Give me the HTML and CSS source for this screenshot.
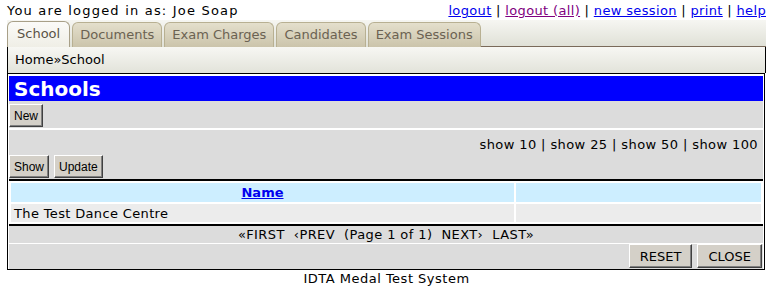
FILE: index.html
```html
<!DOCTYPE html>
<html>
<head>
<meta charset="utf-8">
<link rel="stylesheet" href="styles.css">
</head>
<body>
<div class="topbar">
  <span class="who">You are logged in as: Joe Soap</span>
  <span class="links"><a href="#">logout</a> | <a href="#" class="visited">logout (all)</a> | <a href="#">new session</a> | <a href="#">print</a> | <a href="#">help</a></span>
</div>
<div class="tabbar">
  <span class="tab active">School</span>
  <span class="tab">Documents</span>
  <span class="tab">Exam Charges</span>
  <span class="tab">Candidates</span>
  <span class="tab">Exam Sessions</span>
  <span class="tabfill"></span>
</div>
<div class="crumb">Home»School</div>
<div class="main">
  <div class="title">Schools</div>
  <div class="panel">
    <div class="row-new"><button class="btn small">New</button></div>
    <div class="row-show">
      <div class="showlinks">show 10 | show 25 | show 50 | show 100</div>
      <div class="showbtns"><button class="btn small">Show</button><button class="btn small">Update</button></div>
    </div>
    <div class="tablewrap">
      <table class="grid">
        <tr class="head"><th class="c1"><a href="#">Name</a></th><th class="c2"></th></tr>
        <tr class="data"><td>The Test Dance Centre</td><td></td></tr>
      </table>
    </div>
    <div class="pager">«FIRST&nbsp;&nbsp;‹PREV&nbsp;&nbsp;(Page 1 of 1)&nbsp;&nbsp;NEXT›&nbsp;&nbsp;LAST»</div>
    <div class="actions"><button class="btn big">RESET</button><button class="btn big">CLOSE</button></div>
  </div>
</div>
<div class="footer">IDTA Medal Test System</div>
</body>
</html>
```
FILE: styles.css
```css
body {
  margin: 0;
  padding: 0 7px;
  font-family: "DejaVu Sans", Verdana, sans-serif;
  font-size: 13px;
  color: #000;
  background: #fff;
}
a { color: #0000ee; }
a.visited { color: #800080; }
.topbar {
  display: flex;
  justify-content: space-between;
  height: 20px;
  padding-top: 3px;
  box-sizing: border-box;
  line-height: 16px;
}
.who { letter-spacing: 1.2px; }
.links { letter-spacing: 0.35px; }
.tabbar {
  display: flex;
  align-items: flex-end;
  height: 27px;
  background: linear-gradient(#f6f6f2, #dfe0d6);
}
.tab {
  height: 24px;
  line-height: 24px;
  padding: 0 7px;
  margin-right: 2px;
  color: #6b6252;
  border: 1px solid #b8b092;
  border-bottom: none;
  border-radius: 6px 6px 0 0;
  background: linear-gradient(#e4dfcc, #cbc4ab);
}
.tab.active {
  height: 25px;
  padding: 0 9px;
  color: #5a5246;
  background: linear-gradient(#fbfbf8, #efeee6);
  border-color: #a8a088;
}
.tabfill {
  flex: 1;
  align-self: stretch;
  border-bottom: 1px solid #7a6a5a;
  margin-left: -2px;
}
.crumb {
  height: 26px;
  line-height: 25px;
  padding-left: 7px;
  border-left: 1px solid #000;
  border-right: 1px solid #000;
  background: linear-gradient(#f7f7f3, #e2e3da);
}
.main {
  border: 1px solid #000;
  padding: 2px 1px 0 1px;
  margin-right: 1px;
}
.title {
  height: 25px;
  line-height: 26px;
  background: #0000ff;
  color: #fff;
  font-weight: bold;
  font-size: 20px;
  padding-left: 5px;
}
.panel {
  background: #dcdcdc;
}
.btn {
  font-family: "Liberation Sans", Arial, sans-serif;
  background: #d4d0c8;
  border: 1px solid;
  border-color: #fff #404040 #404040 #fff;
  box-shadow: inset -1px -1px 0 #808080;
  color: #000;
  padding: 0;
  margin: 0;
}
.btn.small {
  font-size: 12px;
  height: 23px;
  padding: 0 4px;
}
.btn.big {
  font-family: "DejaVu Sans", Verdana, sans-serif;
  font-size: 13px;
  height: 24px;
  padding: 0 10px;
  margin-left: 5px;
}
.row-new {
  padding: 3px 0 1px 0;
  border-bottom: 2px solid #fff;
}
.row-show {
  padding-top: 5px;
}
.showlinks {
  text-align: right;
  padding-right: 5px;
  height: 20px;
  line-height: 20px;
  letter-spacing: 0.4px;
}
.showbtns {
  display: flex;
  gap: 5px;
  padding-bottom: 1px;
}
.tablewrap {
  border-top: 2px solid #000;
  border-bottom: 2px solid #000;
  background: #fff;
}
.grid {
  width: 100%;
  border-collapse: separate;
  border-spacing: 2px;
}
.grid th, .grid td {
  padding: 0 3px;
  height: 19px;
  font-size: 13px;
}
.grid tr.head th { background: #cdeeff; }
.grid th.c1 { width: 497px; }
.grid tr.data td { background: #ececec; text-align: left; letter-spacing: 0.35px; height: 18px; }
.pager {
  text-align: center;
  height: 17px;
  line-height: 17px;
  border-bottom: 1px solid #fff;
  letter-spacing: 0.4px;
}
.actions {
  display: flex;
  justify-content: flex-end;
  padding: 0 1px 1px 0;
}
.footer {
  text-align: center;
  padding-top: 1px;
  letter-spacing: 0.5px;
}
```
